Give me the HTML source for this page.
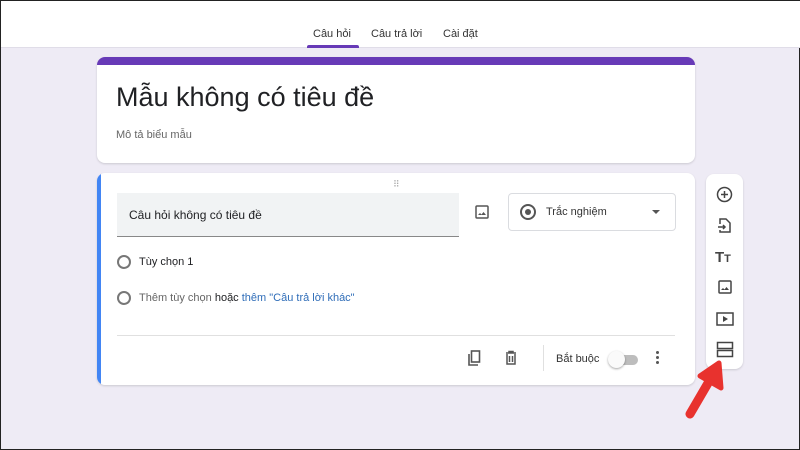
<!DOCTYPE html><html><head><meta charset="utf-8"><style>
*{margin:0;padding:0;box-sizing:border-box}
body{width:800px;height:450px;overflow:hidden;background:#eeebf5;font-family:"Liberation Sans",sans-serif;position:relative;border:1px solid #222}
.hdr{position:absolute;left:0;top:0;width:800px;height:47px;background:#fff;border-bottom:1px solid #e0dde8}
.tab{position:absolute;top:27px;font-size:11px;color:#333}
.card{position:absolute;background:#fff;border-radius:8px;box-shadow:0 1px 2px rgba(0,0,0,.15)}
.abs{position:absolute}
.radio{position:absolute;width:14px;height:14px;border:2px solid #777;border-radius:50%}
</style></head><body>
<div class="hdr">
<div class="tab" style="left:312px">Câu hỏi</div>
<div class="tab" style="left:370px">Câu trả lời</div>
<div class="tab" style="left:442px">Cài đặt</div>
<div class="abs" style="left:306px;top:44px;width:52px;height:3px;background:#673ab7;border-radius:2px 2px 0 0"></div>
</div>
<div class="card" style="left:96px;top:56px;width:598px;height:106px;overflow:hidden">
<div class="abs" style="left:0;top:0;width:100%;height:8px;background:#673ab7"></div>
<div class="abs" style="left:19px;top:25px;font-size:27px;color:#202124">Mẫu không có tiêu đề</div>
<div class="abs" style="left:19px;top:72px;font-size:11px;color:#666">Mô tả biểu mẫu</div>
</div>
<div class="card" style="left:96px;top:172px;width:598px;height:212px;overflow:hidden">
<div class="abs" style="left:0;top:0;width:4px;height:100%;background:#4285f4"></div>
<div class="abs" style="left:296px;top:6px;font-size:9px;color:#aaa;letter-spacing:-1px">⠿</div>
<div class="abs" style="left:20px;top:20px;width:342px;height:44px;background:#f1f3f4;border-bottom:1px solid #888"></div>
<div class="abs" style="left:32px;top:35px;font-size:12px;color:#202124">Câu hỏi không có tiêu đề</div>
<svg class="abs" style="left:377px;top:31px" width="16" height="16" viewBox="0 0 16 16"><rect x="2" y="2" width="12" height="12" rx="1" fill="none" stroke="#555" stroke-width="1.5"/><path d="M4 11l2-2 1.5 1.5 2-2.5 2.5 3z" fill="#555"/></svg>
<div class="abs" style="left:411px;top:20px;width:168px;height:38px;border:1px solid #dadce0;border-radius:4px"></div>
<div class="abs" style="left:423px;top:31px;width:16px;height:16px;border:2px solid #555;border-radius:50%"><div style="margin:3px;width:6px;height:6px;background:#555;border-radius:50%"></div></div>
<div class="abs" style="left:449px;top:33px;font-size:11px;color:#333">Trắc nghiệm</div>
<div class="abs" style="left:555px;top:37px;border:4px solid transparent;border-top:4px solid #555"></div>
<div class="radio" style="left:20px;top:82px"></div>
<div class="abs" style="left:42px;top:83px;font-size:11px;color:#202124">Tùy chọn 1</div>
<div class="radio" style="left:20px;top:118px"></div>
<div class="abs" style="left:42px;top:119px;font-size:11px;color:#666">Thêm tùy chọn <span style="color:#202124">hoặc</span> <span style="color:#2f6db8">thêm "Câu trả lời khác"</span></div>
<div class="abs" style="left:20px;top:162px;width:558px;height:1px;background:#e0e0e0"></div>
<svg class="abs" style="left:369px;top:177px" width="16" height="16" viewBox="0 0 16 16"><path d="M3 4v11h9" fill="none" stroke="#555" stroke-width="1.6"/><rect x="5.5" y="1" width="8" height="11" fill="none" stroke="#555" stroke-width="1.6"/></svg>
<svg class="abs" style="left:406px;top:177px" width="16" height="16" viewBox="0 0 16 16"><path d="M3 3h10M6 3V1.5h4V3M4 4v10h8V4M6.5 6v6M9.5 6v6" fill="none" stroke="#555" stroke-width="1.5"/></svg>
<div class="abs" style="left:446px;top:172px;width:1px;height:26px;background:#e0e0e0"></div>
<div class="abs" style="left:459px;top:180px;font-size:11px;color:#333">Bắt buộc</div>
<div class="abs" style="left:515px;top:182px;width:26px;height:10px;background:#bdbdbd;border-radius:5px"></div>
<div class="abs" style="left:511px;top:178px;width:17px;height:17px;background:#fafafa;border-radius:50%;box-shadow:0 1px 2px rgba(0,0,0,.35)"></div>
<div class="abs" style="left:559px;top:178px;width:3px;line-height:5px;font-size:0"><div style="width:3px;height:3px;background:#555;border-radius:50%;margin-bottom:2px"></div><div style="width:3px;height:3px;background:#555;border-radius:50%;margin-bottom:2px"></div><div style="width:3px;height:3px;background:#555;border-radius:50%"></div></div>
</div>
<div class="card" style="left:705px;top:173px;width:37px;height:195px">
<svg class="abs" style="left:10px;top:12px" width="17" height="17" viewBox="0 0 17 17"><circle cx="8.5" cy="8.5" r="7" fill="none" stroke="#444" stroke-width="1.5"/><path d="M8.5 5v7M5 8.5h7" stroke="#444" stroke-width="1.5"/></svg>
<svg class="abs" style="left:11px;top:43px" width="16" height="17" viewBox="0 0 16 17"><path d="M3 7V2h6l4 4v9H3v-2" fill="none" stroke="#444" stroke-width="1.5"/><path d="M1 10h7M6 8l2 2-2 2" fill="none" stroke="#444" stroke-width="1.5"/></svg>
<div class="abs" style="left:9px;top:75px;font-size:15px;font-weight:bold;color:#444">T<span style="font-size:11px">T</span></div>
<svg class="abs" style="left:11px;top:105px" width="16" height="16" viewBox="0 0 16 16"><rect x="2" y="2" width="12" height="12" rx="1" fill="none" stroke="#444" stroke-width="1.5"/><path d="M4 11l2-2 1.5 1.5 2-2.5 2.5 3z" fill="#444"/></svg>
<svg class="abs" style="left:10px;top:137px" width="18" height="16" viewBox="0 0 18 16"><rect x="1" y="2" width="16" height="12" fill="none" stroke="#444" stroke-width="1.5"/><path d="M7 5v6l5-3z" fill="#444"/></svg>
<svg class="abs" style="left:10px;top:167px" width="18" height="17" viewBox="0 0 18 17"><rect x="1.5" y="1.5" width="15" height="6" fill="none" stroke="#444" stroke-width="1.5"/><rect x="1.5" y="9.5" width="15" height="6" fill="none" stroke="#444" stroke-width="1.5"/></svg>
</div>
<svg class="abs" style="left:680px;top:355px" width="50" height="65" viewBox="0 0 50 65"><path d="M9 58L30 22" stroke="#e8322e" stroke-width="9" stroke-linecap="round"/><path d="M19 20L38 7l2 25z" fill="#e8322e" stroke="#e8322e" stroke-width="5" stroke-linejoin="round"/></svg>
</body></html>
